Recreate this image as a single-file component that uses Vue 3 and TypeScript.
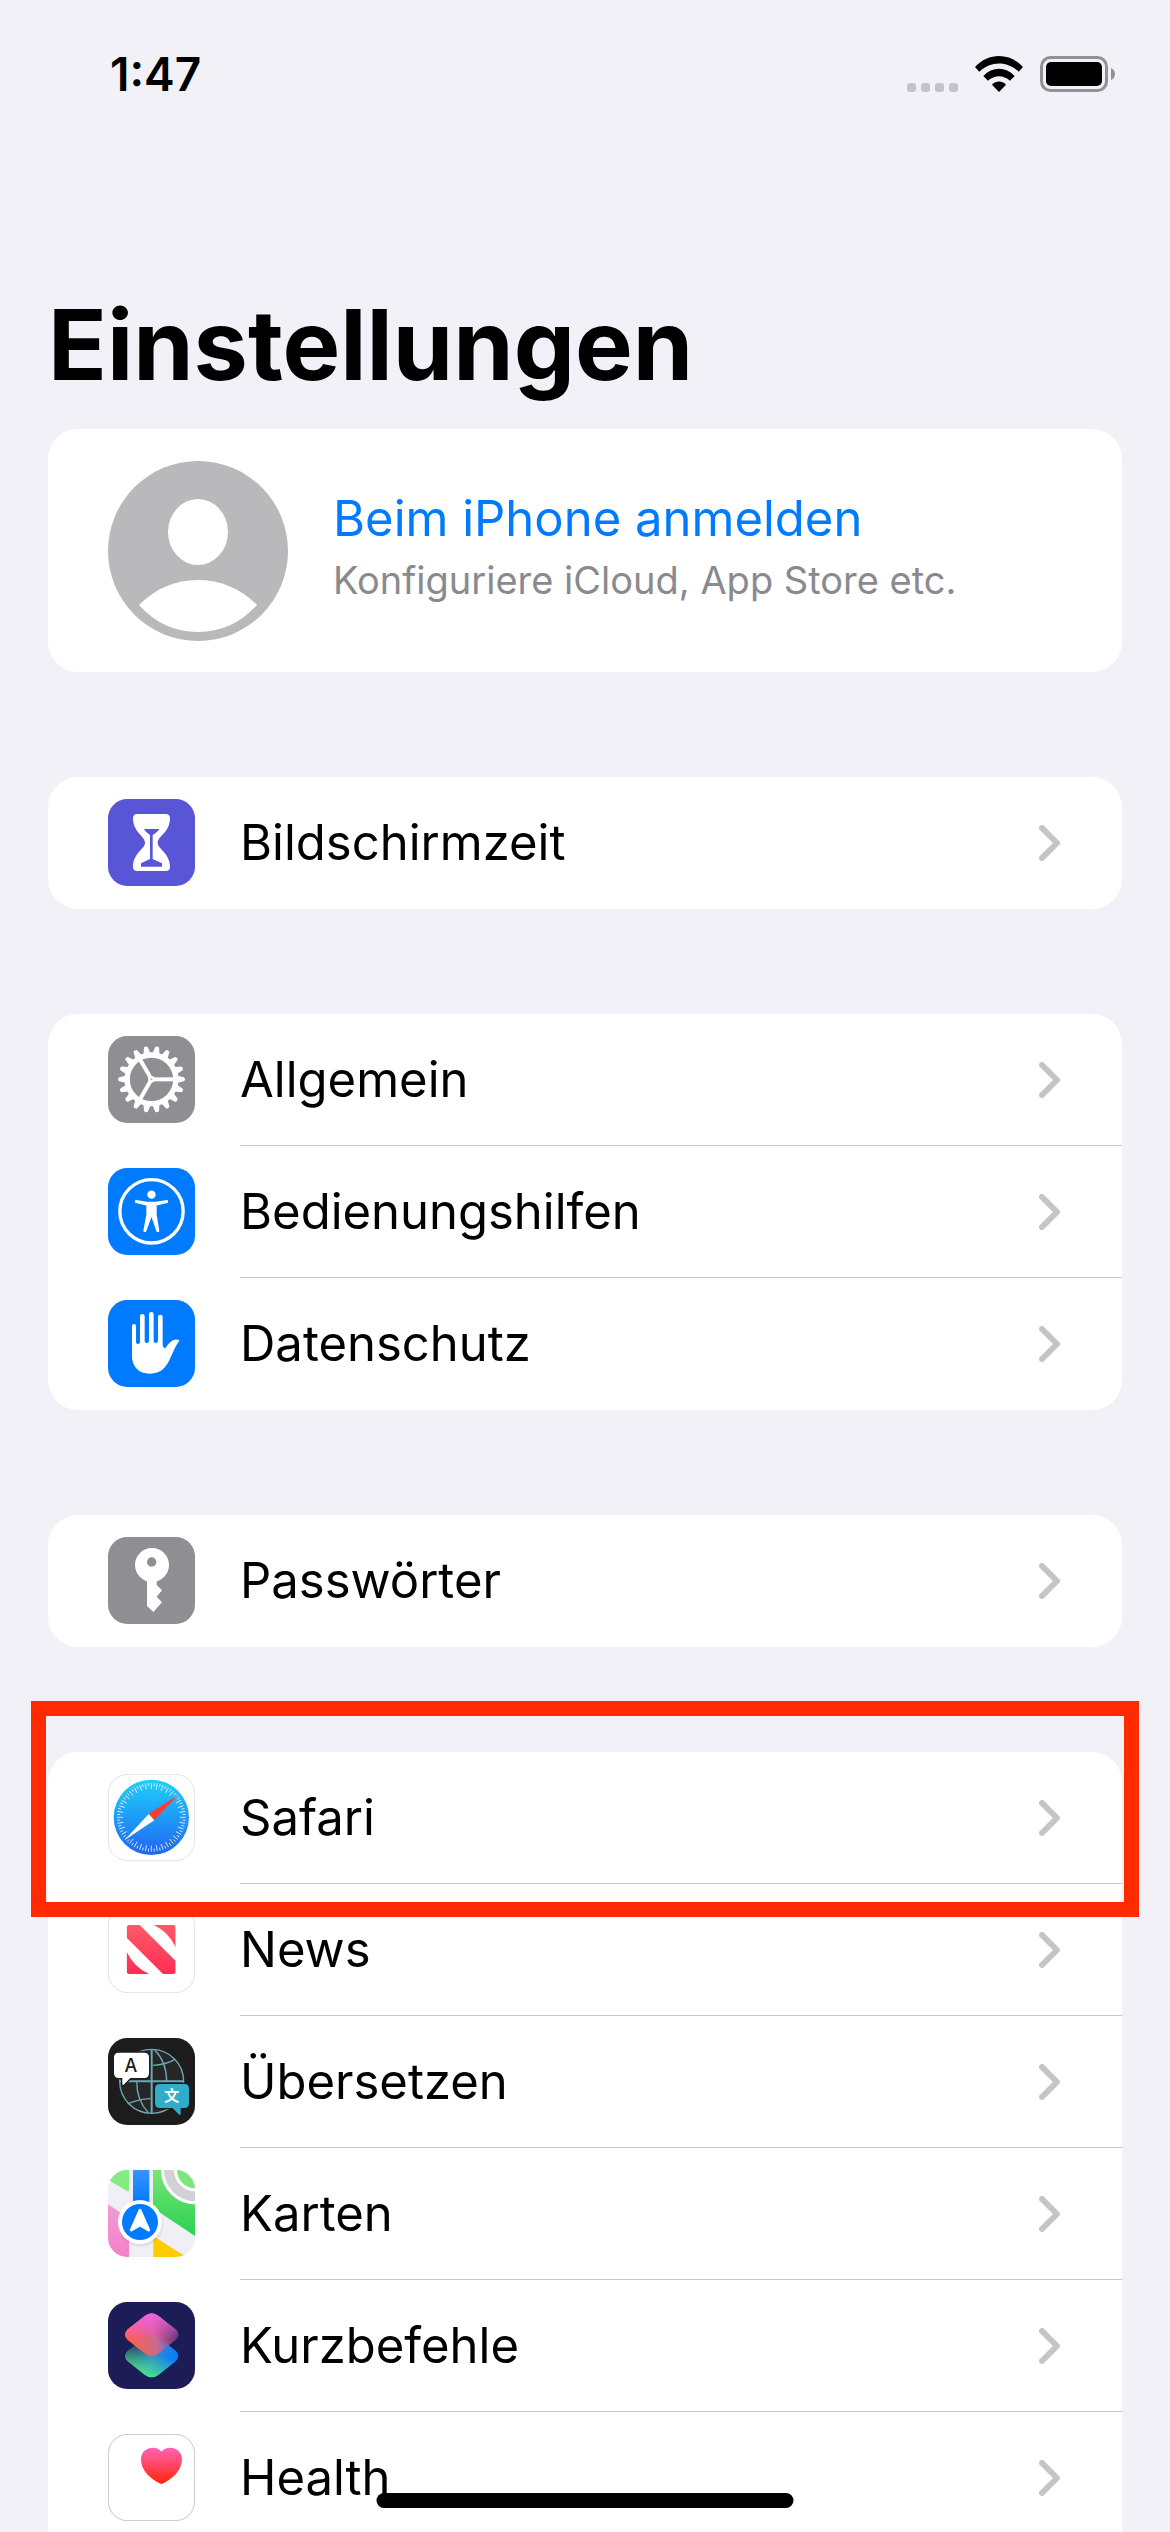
<script setup lang="ts">
interface Item {
  id: string
  label: string
  marked?: boolean
}

const groups: Item[][] = [
  [{ id: 'screentime', label: 'Bildschirmzeit' }],
  [
    { id: 'general', label: 'Allgemein' },
    { id: 'accessibility', label: 'Bedienungshilfen' },
    { id: 'privacy', label: 'Datenschutz' },
  ],
  [{ id: 'passwords', label: 'Passwörter' }],
  [
    { id: 'safari', label: 'Safari', marked: true },
    { id: 'news', label: 'News' },
    { id: 'translate', label: 'Übersetzen' },
    { id: 'maps', label: 'Karten' },
    { id: 'shortcuts', label: 'Kurzbefehle' },
    { id: 'health', label: 'Health' },
  ],
]

const teeth: number[] = Array.from({ length: 18 }, (_, i) => i * 20)
const ticks: number[] = Array.from({ length: 72 }, (_, i) => i * 5)
const diamond =
  'M110 42Q131 26 152 42L203 82Q219 98 203 114L152 154Q131 170 110 154L59 114Q43 98 59 82Z'
</script>

<template>
  <div class="screen">
    <header class="status">
      <time class="clock">1:47</time>
      <div class="indicators">
        <svg class="dots" viewBox="0 0 51 9" aria-hidden="true">
          <rect v-for="n in 4" :key="n" :x="(n - 1) * 14" y="0" width="9" height="9" rx="3" fill="#c3c2c8" />
        </svg>
        <svg class="wifi" viewBox="0 0 144 108" aria-hidden="true">
          <path d="M0 33C40-11 104-11 144 33L131 47C97 14 47 14 13 47Z" stroke-linejoin="round" />
          <path d="M25 60C53 31 91 31 119 60L105 74C86 56 58 56 39 74Z" />
          <path d="M51 86C63 73 81 73 93 86L72 108Z" />
        </svg>
        <svg class="battery" viewBox="0 0 75 36" aria-hidden="true">
          <rect x="1.5" y="1.5" width="65" height="33" rx="9" fill="none" stroke="#929195" stroke-width="3" />
          <rect x="6" y="6" width="56" height="24" rx="5" />
          <path d="M71 12Q75 14 75 18T71 24Z" fill="#929195" />
        </svg>
      </div>
    </header>

    <main class="content">
      <h1 class="title">Einstellungen</h1>

      <a class="card profile" href="#anmelden">
        <svg class="avatar" viewBox="0 0 180 180" aria-hidden="true">
          <circle cx="90" cy="90" r="90" fill="#b9b9bb" />
          <ellipse cx="90" cy="71" rx="30" ry="33" fill="#fff" />
          <path d="M31 144C48 127 68 119 90 119S132 127 149 144C133 162 113 171 90 171S47 162 31 144Z" fill="#fff" />
        </svg>
        <span class="profile-text">
          <span class="profile-name">Beim iPhone anmelden</span>
          <span class="profile-sub">Konfiguriere iCloud, App Store etc.</span>
        </span>
      </a>

      <ul v-for="(group, g) in groups" :key="g" class="card group">
        <li v-for="item in group" :key="item.id" class="item">
          <a class="row" :href="'#' + item.id">
            <svg class="icon" viewBox="0 0 261 261" aria-hidden="true">
              <g v-if="item.id === 'screentime'">
                <rect width="261" height="261" rx="58" fill="#5856d6" />
                <path d="M88 45H173Q186 45 186 58C186 100 149 112 149 131S186 162 186 203Q186 216 173 216H88Q75 216 75 203C75 162 111 150 111 131S75 100 75 58Q75 45 88 45Z" fill="#fff" />
                <path d="M108 90H154Q151 98 134 108V180L162 193V203H99V193L126 180V108Q111 98 108 90Z" fill="#5856d6" />
              </g>

              <g v-else-if="item.id === 'general'">
                <rect width="261" height="261" rx="58" fill="#8e8e93" />
                <g transform="translate(130.500 130)" fill="#fff">
                  <path v-for="a in teeth" :key="a" d="M72-12L97-6Q100-5 100 0T97 6L72 12Z" :transform="`rotate(${a})`" />
                  <circle r="73" fill="none" stroke="#fff" stroke-width="16" />
                  <path v-for="a in [0, 120, 240]" :key="'s' + a" d="M0-6H68V6H0Z" :transform="`rotate(${a})`" />
                  <circle r="10" />
                  <circle r="3" fill="#b5b5b9" />
                </g>
              </g>

              <g v-else-if="item.id === 'accessibility'">
                <rect width="261" height="261" rx="58" fill="#007aff" />
                <circle cx="130.500" cy="130" r="95" fill="none" stroke="#fff" stroke-width="10" />
                <circle cx="130.500" cy="80" r="12.500" fill="#fff" />
                <path d="M84 99L117 104H144L177 99V102L143 110V140L151 189H148L132 142H129L112 189H109L118 140V110L84 102Z" fill="#fff" stroke="#fff" stroke-width="6" stroke-linejoin="round" />
              </g>

              <g v-else-if="item.id === 'privacy'">
                <rect width="261" height="261" rx="58" fill="#007aff" />
                <path d="M72 78Q72 72 78 72T84 78V127Q84 132 90 132T96 127V49Q96 42 103 42T110 49V123Q110 129 116 129T123 123V43Q123 36 130 36T137 43V123Q137 129 143 129T150 123V51Q150 44 157 44T164 51V135Q167 151 175 141C185 126 197 114 213 120Q215 122 212 125C203 136 196 154 188 172C175 204 158 221 126 221C92 221 72 200 72 168Z" fill="#fff" />
              </g>

              <g v-else-if="item.id === 'passwords'">
                <rect width="261" height="261" rx="58" fill="#8e8e93" />
                <circle cx="132" cy="84" r="51" fill="#fff" />
                <path d="M117 120H146V144L162 160L146 179L162 196L136 225L117 207Z" fill="#fff" />
                <circle cx="131" cy="75" r="14" fill="#8e8e93" />
              </g>

              <g v-else-if="item.id === 'safari'">
                <defs>
                  <linearGradient id="compass" x2="0" y2="1">
                    <stop stop-color="#1ed0fb" />
                    <stop offset="1" stop-color="#1f66f0" />
                  </linearGradient>
                </defs>
                <rect x="1" y="1" width="259" height="259" rx="58" fill="#fff" stroke="#e2e2e2" stroke-width="3" />
                <circle cx="130" cy="130" r="113" fill="url(#compass)" />
                <g transform="translate(130 130)" stroke="#fff" stroke-width="2.500" opacity="0.9">
                  <line v-for="(a, i) in ticks" :key="a" x1="103" :x2="i % 2 ? 94 : 85" :transform="`rotate(${a})`" />
                </g>
                <path d="M210 63L139 139L122 120Z" fill="#ff3b30" />
                <path d="M50 198L122 120L139 139Z" fill="#fff" />
              </g>

              <g v-else-if="item.id === 'news'">
                <defs>
                  <linearGradient id="news-red" gradientUnits="userSpaceOnUse" x1="0" y1="57" x2="0" y2="204">
                    <stop stop-color="#ff5a68" />
                    <stop offset="1" stop-color="#ff2d55" />
                  </linearGradient>
                  <clipPath id="news-box"><rect x="56" y="57" width="147" height="147" rx="8" /></clipPath>
                </defs>
                <rect x="1" y="1" width="259" height="259" rx="58" fill="#fff" stroke="#e2e2e2" stroke-width="3" />
                <g clip-path="url(#news-box)" fill="url(#news-red)">
                  <path d="M56 57H95L203 165V204H165L56 95Z" />
                  <path d="M137 57H203V124Q182 78 137 57Z" />
                  <path d="M56 137Q78 183 123 204H56Z" />
                </g>
              </g>

              <g v-else-if="item.id === 'translate'">
                <rect width="261" height="261" rx="58" fill="#1c1c1c" />
                <g stroke="#6aa9b5" stroke-width="4" fill="none">
                  <circle cx="131" cy="130" r="96" fill="#262626" />
                  <path d="M131 34V226M35 130H227" stroke-width="6" />
                  <path d="M140 36Q176 72 176 130M135 82Q174 80 201 64M121 224Q86 188 86 130M127 182Q88 184 59 198" />
                </g>
                <path d="M32 44H109Q123 44 123 58V106Q123 120 109 120H67L47 140Q43 143 43 136V120H32Q18 120 18 106V58Q18 44 32 44Z" fill="#fff" stroke="#1c1c1c" stroke-width="8" paint-order="stroke" />
                <path d="M155 138H229Q243 138 243 152V196Q243 210 229 210H218V226Q218 234 212 229L194 210H155Q141 210 141 196V152Q141 138 155 138Z" fill="#30adc9" stroke="#1c1c1c" stroke-width="8" paint-order="stroke" />
                <text x="69" y="103" class="glyph latin" text-anchor="middle">A</text>
                <text x="191" y="189" class="glyph han" text-anchor="middle">文</text>
              </g>

              <g v-else-if="item.id === 'maps'">
                <defs>
                  <linearGradient id="park" x2="0" y2="1">
                    <stop stop-color="#76e674" />
                    <stop offset="1" stop-color="#2bd053" />
                  </linearGradient>
                  <linearGradient id="lane" x2="0" y2="1">
                    <stop stop-color="#3a93ff" />
                    <stop offset="1" stop-color="#007aff" />
                  </linearGradient>
                  <linearGradient id="block" x2="0" y2="1">
                    <stop stop-color="#f29ad8" />
                    <stop offset="1" stop-color="#f281c8" />
                  </linearGradient>
                  <clipPath id="maps-tile"><rect width="261" height="261" rx="58" /></clipPath>
                </defs>
                <g clip-path="url(#maps-tile)">
                  <rect width="261" height="261" fill="#f0eff5" />
                  <path d="M0 0H63V59Q63 66 56 62L0 29Z" fill="#84eb82" />
                  <path d="M0 103L63 145V261H0Z" fill="url(#block)" />
                  <path d="M135 0H261V198L135 114Z" fill="url(#park)" />
                  <path d="M136 198L235 261H136Z" fill="#ffcc00" />
                  <rect x="75" width="49" height="100" fill="url(#lane)" />
                  <circle cx="262" cy="0" r="103" fill="#fff" />
                  <circle cx="262" cy="0" r="94" fill="#d1d1d6" />
                  <circle cx="262" cy="0" r="64" fill="#fff" />
                  <circle cx="262" cy="0" r="55" fill="#7ce87a" />
                  <circle cx="98" cy="162" r="68" fill="#555" opacity="0.1" />
                  <circle cx="96" cy="156" r="66" fill="#fff" />
                  <circle cx="96" cy="156" r="54" fill="#007aff" />
                  <path d="M96 121L122 180L96 165L70 180Z" fill="#fff" stroke="#fff" stroke-width="9" stroke-linejoin="round" />
                </g>
              </g>

              <g v-else-if="item.id === 'shortcuts'">
                <defs>
                  <linearGradient id="warm" gradientUnits="userSpaceOnUse" x1="70" y1="130" x2="200" y2="80">
                    <stop stop-color="#ff6150" />
                    <stop offset="0.55" stop-color="#d95a94" />
                    <stop offset="1" stop-color="#553470" />
                  </linearGradient>
                  <linearGradient id="pink" gradientUnits="userSpaceOnUse" x1="131" y1="34" x2="131" y2="115">
                    <stop stop-color="#f565e0" />
                    <stop offset="1" stop-color="#f565e0" stop-opacity="0" />
                  </linearGradient>
                  <linearGradient id="cool" gradientUnits="userSpaceOnUse" x1="80" y1="56" x2="200" y2="101">
                    <stop stop-color="#2b4668" />
                    <stop offset="0.5" stop-color="#2f8cc8" />
                    <stop offset="1" stop-color="#0c7dff" />
                  </linearGradient>
                  <linearGradient id="mint" gradientUnits="userSpaceOnUse" x1="120" y1="162" x2="145" y2="91">
                    <stop stop-color="#4be38c" />
                    <stop offset="1" stop-color="#4be38c" stop-opacity="0" />
                  </linearGradient>
                  <linearGradient id="blend" gradientUnits="userSpaceOnUse" x1="80" y1="61" x2="185" y2="61">
                    <stop stop-color="#f2644f" />
                    <stop offset="0.6" stop-color="#c4718a" />
                    <stop offset="1" stop-color="#4b74e0" />
                  </linearGradient>
                  <clipPath id="upper"><path :d="diamond" /></clipPath>
                </defs>
                <rect width="261" height="261" rx="58" fill="#1c1d57" />
                <g transform="translate(0 64)">
                  <path :d="diamond" fill="url(#cool)" />
                  <path :d="diamond" fill="url(#mint)" />
                </g>
                <path :d="diamond" fill="url(#warm)" />
                <path :d="diamond" fill="url(#pink)" />
                <g clip-path="url(#upper)">
                  <path :d="diamond" transform="translate(0 64)" fill="url(#blend)" class="overlap" />
                </g>
              </g>

              <g v-else>
                <defs>
                  <linearGradient id="heart" x2="0" y2="1">
                    <stop stop-color="#ff63b8" />
                    <stop offset="1" stop-color="#ff2608" />
                  </linearGradient>
                </defs>
                <rect x="1" y="1" width="259" height="259" rx="58" fill="#fff" stroke="#c7c7c7" stroke-width="3" />
                <path d="M160 53C168 43 177 41 187 41C208 41 222 56 222 76C222 110 192 135 166 148Q160 151 155 148C128 135 99 110 99 76C99 56 113 41 134 41C144 41 153 43 160 53Z" fill="url(#heart)" />
              </g>
            </svg>
            <span class="body">
              <span class="label">{{ item.label }}</span>
              <svg class="chevron" viewBox="0 0 21 36" aria-hidden="true">
                <path d="M3 3L18 18L3 33" fill="none" stroke="#c5c5c7" stroke-width="6" stroke-linecap="round" stroke-linejoin="round" />
              </svg>
            </span>
          </a>
          <span v-if="item.marked" class="marker"></span>
        </li>
      </ul>
    </main>

    <div class="home-bar"></div>
  </div>
</template>

<style>
body {
  margin: 0;
  background: #f2f1f7;
}
</style>

<style scoped>
.screen {
  position: relative;
  display: flex;
  flex-direction: column;
  height: 100vh;
  overflow: hidden;
  background: #f2f1f7;
  color: #000;
  font-family: Inter, "Liberation Sans", sans-serif;
}

.status {
  flex: none;
  display: flex;
  align-items: flex-end;
  justify-content: space-between;
  box-sizing: border-box;
  height: 92px;
  padding: 0 55px 0 110px;
}

.clock {
  font-size: 46px;
  font-weight: 600;
  line-height: 36px;
}

.indicators {
  display: flex;
  align-items: flex-end;
}

.dots {
  width: 51px;
  height: 9px;
}

.wifi {
  width: 48px;
  height: 36px;
  margin: 0 17px;
}

.battery {
  width: 75px;
  height: 36px;
}

.content {
  flex: 1;
  min-height: 0;
  overflow-y: auto;
  scrollbar-width: none;
  padding: 0 48px;
}

.title {
  margin: 192px 0 24px;
  font-size: 97px;
  font-weight: 700;
  line-height: 121px;
}

.card {
  display: block;
  background: #fff;
  border-radius: 30px;
}

.profile {
  display: flex;
  align-items: center;
  gap: 45px;
  box-sizing: border-box;
  min-height: 243px;
  padding: 30px 60px;
  text-decoration: none;
}

.avatar {
  flex: none;
  width: 180px;
  height: 180px;
}

.profile-text {
  display: flex;
  flex-direction: column;
}

.profile-name {
  color: #007aff;
  font-size: 49px;
  line-height: 58px;
}

.profile-sub {
  color: #8a8a8e;
  font-size: 38px;
  line-height: 64px;
}

.group {
  margin: 105px 0 0;
  padding: 0;
  list-style: none;
}

.group:last-child {
  border-bottom-left-radius: 0;
  border-bottom-right-radius: 0;
}

.item {
  position: relative;
}

.row {
  display: flex;
  align-items: flex-start;
  gap: 45px;
  padding-left: 60px;
  color: inherit;
  text-decoration: none;
}

.icon {
  flex: none;
  width: 87px;
  height: 87px;
  margin-top: 22px;
}

.body {
  flex: 1;
  display: flex;
  align-items: center;
  justify-content: space-between;
  height: 132px;
  padding-right: 62px;
  box-shadow: inset 0 -1px #c6c6c8;
}

.item:last-child .body {
  box-shadow: none;
}

.label {
  font-size: 49px;
  line-height: 60px;
}

.chevron {
  width: 21px;
  height: 36px;
}

.glyph {
  font-family: Inter, "Noto Sans CJK SC", sans-serif;
}

.latin {
  font-size: 54px;
  font-weight: 500;
  fill: #1c1c1c;
}

.han {
  font-size: 46px;
  font-weight: 700;
  fill: #fff;
}

.overlap {
  opacity: 0.7;
}

.marker {
  position: absolute;
  z-index: 1;
  inset: -51px -17px -33px;
  border: 15px solid #ff2a00;
  pointer-events: none;
}

.home-bar {
  position: absolute;
  z-index: 2;
  bottom: 24px;
  left: 50%;
  width: 417px;
  height: 15px;
  border-radius: 8px;
  background: #000;
  transform: translateX(-50%);
}
</style>
